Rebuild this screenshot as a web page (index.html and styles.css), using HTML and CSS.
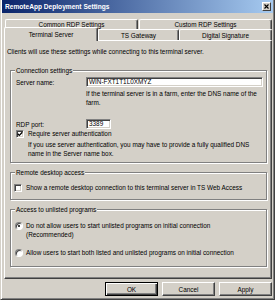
FILE: index.html
```html
<!DOCTYPE html>
<html lang="en">
<head>
<meta charset="utf-8">
<title>RemoteApp Deployment Settings</title>
<link rel="stylesheet" href="styles.css">
</head>
<body>
<div class="window">
  <div class="titlebar">
    <span class="title">RemoteApp Deployment Settings</span>
    <span class="close"><svg width="5" height="5" viewBox="0 0 5 5"><path d="M0.5 0.5L4.5 4.5M4.5 0.5L0.5 4.5" stroke="#000" stroke-width="1.1" fill="none"/></svg></span>
  </div>
  <div class="tabs">
    <div class="tabrow row1">
      <div class="tab t-half">Common RDP Settings</div>
      <div class="tab t-half">Custom RDP Settings</div>
    </div>
    <div class="tabrow row2">
      <div class="tab active t-ts">Terminal Server</div>
      <div class="tab t-gw">TS Gateway</div>
      <div class="tab t-sig">Digital Signature</div>
    </div>
  </div>
  <div class="panel">
    <p class="intro">Clients will use these settings while connecting to this terminal server.</p>
    <fieldset class="group g1">
      <legend>Connection settings</legend>
      <div class="row">
        <span class="lbl">Server name:</span>
        <div class="input server-input">WIN-FXT1T1L0XMYZ</div>
      </div>
      <p class="help help1">If the terminal server is in a farm, enter the DNS name of the<br>farm.</p>
      <div class="row port-row">
        <span class="lbl">RDP port:</span>
        <div class="input port-input">3389</div>
      </div>
      <div class="check-row">
        <span class="box"><svg width="6" height="6" viewBox="0 0 6 6"><path d="M0.7 2.8L2.3 4.4L5.3 1.2" stroke="#000" stroke-width="1.3" fill="none"/></svg></span>
        <span>Require server authentication</span>
      </div>
      <p class="help help2">If you use server authentication, you may have to provide a fully qualified DNS<br>name in the Server name box.</p>
    </fieldset>
    <fieldset class="group g2">
      <legend>Remote desktop access</legend>
      <div class="check-row">
        <span class="box box2"></span>
        <span>Show a remote desktop connection to this terminal server in TS Web Access</span>
      </div>
    </fieldset>
    <fieldset class="group g3">
      <legend>Access to unlisted programs</legend>
      <div class="radio-row">
        <span class="radio checked"></span>
        <span class="nowrap">Do not allow users to start unlisted programs on initial connection<br>(Recommended)</span>
      </div>
      <div class="radio-row r2">
        <span class="radio"></span>
        <span class="nowrap">Allow users to start both listed and unlisted programs on initial connection</span>
      </div>
    </fieldset>
  </div>
  <div class="buttons">
    <div class="btn default">OK</div>
    <div class="btn">Cancel</div>
    <div class="btn">Apply</div>
  </div>
</div>
</body>
</html>
```
FILE: styles.css
```css
* { box-sizing: border-box; }
html, body { margin: 0; padding: 0; }
body {
  width: 275px;
  height: 300px;
  overflow: hidden;
  font-family: "Liberation Sans", Arial, sans-serif;
  font-size: 6.4px;
  line-height: 9px;
  color: #000;
  background: #D4D0C8;
}
.window {
  width: 275px;
  height: 300px;
  background: #D4D0C8;
  border: 1px solid;
  border-top: 0;
  border-color: #D4D0C8 #404040 #404040 #D4D0C8;
  box-shadow: inset 1px 0 0 #fff, inset -1px -1px 0 #808080;
  padding: 0 2px 0 3px;
  display: flex;
  flex-direction: column;
}
.titlebar {
  height: 13px;
  margin: 0 -1px 0 -2px;
  padding: 0 2px 0 3px;
  display: flex;
  align-items: center;
  justify-content: space-between;
  background: linear-gradient(to right, #0A246A, #A6CAF0);
}
.title { color: #fff; font-weight: bold; font-size: 6.6px; }
.close {
  width: 9px;
  height: 9px;
  background: #D4D0C8;
  border: 1px solid;
  border-color: #fff #404040 #404040 #fff;
  display: flex;
  align-items: center;
  justify-content: center;
}
.close svg { display: block; }
.tabs { margin-top: 6px; }
.tabrow { display: flex; }
.row1 { height: 10px; padding-left: 1px; gap: 1px; }
.row2 { height: 11px; }
.tab {
  height: 100%;
  display: flex;
  align-items: center;
  justify-content: center;
  white-space: nowrap;
  background: #D4D0C8;
  border-top: 1px solid #fff;
  border-left: 1px solid #fff;
  border-right: 1px solid #404040;
  box-shadow: inset -1px 0 0 #808080;
  border-radius: 2px 2px 0 0;
}
.t-half { flex: 1; }
.t-ts { width: 94px; }
.t-gw { width: 81px; }
.t-sig { width: 93px; }
.tab.active {
  height: 14px;
  margin-top: -2px;
  position: relative;
  z-index: 1;
  padding-bottom: 1px;
}
.panel {
  border: 1px solid;
  border-color: #fff #404040 #404040 #fff;
  box-shadow: inset -1px -1px 0 #808080;
  padding: 6px 0 11px 0;
}
.intro { margin: 0 0 0 2px; }
p { margin: 0; }
fieldset {
  margin: 10px 4px 0 5px;
  padding: 2px 3px 4px 5px;
  border: 1px solid #808080;
  box-shadow: inset 1px 1px 0 #fff, 1px 1px 0 #fff;
  min-width: 0;
}
legend {
  padding: 0 1px;
  margin-left: -1px;
  background: #D4D0C8;
  line-height: 9px;
}
.g2 { margin-top: 5px; padding-top: 6px; padding-bottom: 7px; }
.g3 { margin-top: 5px; padding-top: 7px; padding-bottom: 9px; }
.row { display: flex; align-items: center; }
.lbl { width: 70px; flex: none; }
.input {
  height: 10px;
  background: #fff;
  border: 1px solid;
  border-color: #808080 #fff #fff #808080;
  box-shadow: inset 1px 1px 0 #404040, inset -1px -1px 0 #D4D0C8;
  padding: 0 2px;
  line-height: 8px;
  white-space: nowrap;
  overflow: hidden;
}
.server-input { flex: 1; }
.port-input { width: 25px; }
.help { white-space: nowrap; }
.help1 { margin: 2px 0 0 70px; }
.port-row { margin-top: 12px; }
.check-row { display: flex; align-items: center; height: 9px; white-space: nowrap; }
.box {
  width: 8px;
  height: 8px;
  flex: none;
  background: #fff;
  border: 1px solid;
  border-color: #808080 #fff #fff #808080;
  box-shadow: inset 1px 1px 0 #404040, inset -1px -1px 0 #D4D0C8;
  margin-right: 4px;
  display: flex;
  align-items: center;
  justify-content: center;
}
.box svg { display: block; }
.box2 { margin-left: -2px; }
.help2 { margin: 2px 0 0 12px; }
.radio-row { display: flex; align-items: flex-start; }
.r2 { margin-top: 9px; }
.nowrap { white-space: nowrap; }
.radio {
  width: 8px;
  height: 8px;
  flex: none;
  margin: 1px 3px 0 -1px;
  border-radius: 50%;
  background: #fff;
  border: 1px solid;
  border-color: #808080 #fff #fff #808080;
  box-shadow: inset 1px 1px 0 #404040;
  display: flex;
  align-items: center;
  justify-content: center;
}
.radio.checked::after {
  content: "";
  width: 2px;
  height: 2px;
  background: #000;
  border-radius: 50%;
}
.buttons {
  display: flex;
  justify-content: flex-end;
  gap: 4px;
  margin-top: 3px;
}
.btn {
  width: 53px;
  height: 14px;
  display: flex;
  align-items: center;
  justify-content: center;
  border: 1px solid;
  border-color: #fff #404040 #404040 #fff;
  box-shadow: inset -1px -1px 0 #808080;
}
.btn.default {
  border-color: #000;
  box-shadow: inset 1px 1px 0 #fff, inset -1px -1px 0 #404040, inset -2px -2px 0 #808080;
}
```
